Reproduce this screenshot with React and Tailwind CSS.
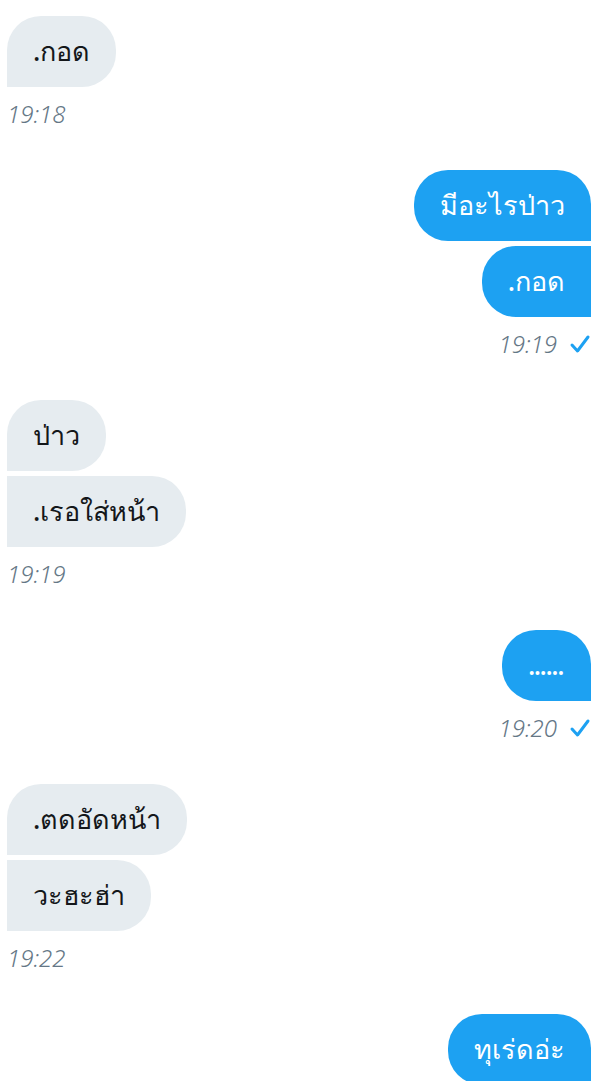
const groups = [
    { side: "in", texts: [".กอด"], time: "19:18" },
    { side: "out", texts: ["มีอะไรป่าว", ".กอด"], time: "19:19" },
    { side: "in", texts: ["ป่าว", ".เรอใส่หน้า"], time: "19:19" },
    { side: "out", texts: ["......"], time: "19:20" },
    { side: "in", texts: [".ตดอัดหน้า", "วะฮะฮ่า"], time: "19:22" },
    { side: "out", texts: ["ทุเร่ดอ่ะ"], time: null },
];

function corners(side, i, n) {
    if (side === "in") {
        if (n === 1 || i === 0) return "rounded-[34px] rounded-bl-none";
        return "rounded-[34px] rounded-l-none";
    }
    if (n === 1 || i === 0) return "rounded-[34px] rounded-br-none";
    return "rounded-[34px] rounded-r-none";
}

function Check() {
    return (
        <svg width="22" height="20" viewBox="0 0 22 20" fill="none" className="ml-[12px]">
            <path d="M3 11 L8.5 17 L19 3" stroke="#1da1f2" strokeWidth="3" strokeLinecap="round" strokeLinejoin="round" />
        </svg>
    );
}

function Bubble({ side, text, cls }) {
    const isIn = side === "in";
    const dots = /^\.+$/.test(text);
    return (
        <div
            className={`h-[71px] flex items-center px-[26px] text-[27px] font-medium ${cls} ${
                isIn ? "bg-[#e6ecf0] text-[#14171a]" : "bg-[#1da1f2] text-white"
            }`}
        >
            <span className={dots ? "tracking-[-1.5px] pr-[2px]" : ""}>{text}</span>
        </div>
    );
}

export default function App() {
    return (
        <div
            className="bg-white min-h-screen pl-[7px] pr-[23px] pt-[16px] flex flex-col gap-[43px] overflow-hidden"
            style={{ fontFamily: '"Noto Sans", sans-serif' }}
        >
            {groups.map((g, gi) => (
                <div key={gi} className={`flex flex-col ${g.side === "in" ? "items-start" : "items-end"}`}>
                    <div className={`flex flex-col gap-[5px] ${g.side === "in" ? "items-start" : "items-end"}`}>
                        {g.texts.map((t, i) => (
                            <Bubble key={i} side={g.side} text={t} cls={corners(g.side, i, g.texts.length)} />
                        ))}
                    </div>
                    {g.time && (
                        <div className="mt-[14px] h-[26px] flex items-center text-[24px] font-light italic text-[#657786]">
                            <span>{g.time}</span>
                            {g.side === "out" && <Check />}
                        </div>
                    )}
                </div>
            ))}
        </div>
    );
}
